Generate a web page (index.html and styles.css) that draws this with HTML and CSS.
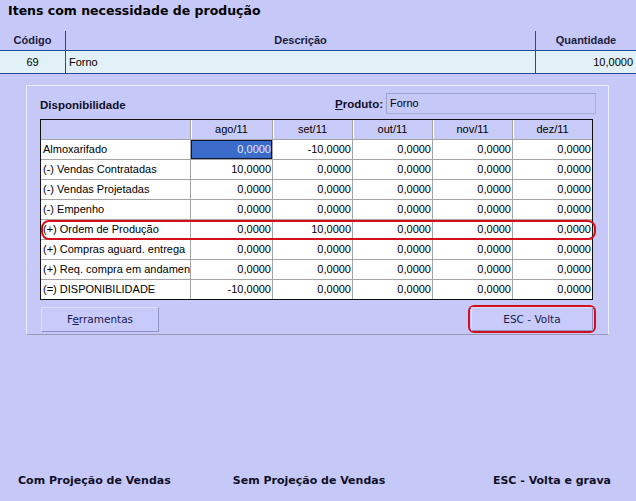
FILE: index.html
```html
<!DOCTYPE html>
<html lang="pt">
<head>
<meta charset="utf-8">
<title>Itens com necessidade de produção</title>
<link rel="stylesheet" href="styles.css">
</head>
<body>
<div class="title">Itens com necessidade de produção</div>

<div class="items">
  <div class="ih">Código</div>
  <div class="ih">Descrição</div>
  <div class="ih last">Quantidade</div>
  <div class="ic center">69</div>
  <div class="ic">Forno</div>
  <div class="ic right last">10,0000</div>
</div>

<div class="panel">
  <div class="ptop">
    <span class="ptitle">Disponibilidade</span>
    <span class="plabel"><u>P</u>roduto:</span>
    <div class="pinput">Forno</div>
  </div>

  <div class="gwrap">
    <div class="grid">
      <div class="gh"></div><div class="gh">ago/11</div><div class="gh">set/11</div><div class="gh">out/11</div><div class="gh">nov/11</div><div class="gh">dez/11</div>

      <div class="gl">Almoxarifado</div><div class="gn sel">0,0000</div><div class="gn">-10,0000</div><div class="gn">0,0000</div><div class="gn">0,0000</div><div class="gn">0,0000</div>

      <div class="gl">(-) Vendas Contratadas</div><div class="gn">10,0000</div><div class="gn">0,0000</div><div class="gn">0,0000</div><div class="gn">0,0000</div><div class="gn">0,0000</div>

      <div class="gl">(-) Vendas Projetadas</div><div class="gn">0,0000</div><div class="gn">0,0000</div><div class="gn">0,0000</div><div class="gn">0,0000</div><div class="gn">0,0000</div>

      <div class="gl">(-) Empenho</div><div class="gn">0,0000</div><div class="gn">0,0000</div><div class="gn">0,0000</div><div class="gn">0,0000</div><div class="gn">0,0000</div>

      <div class="gl">(+) Ordem de Produção</div><div class="gn">0,0000</div><div class="gn">10,0000</div><div class="gn">0,0000</div><div class="gn">0,0000</div><div class="gn">0,0000</div>

      <div class="gl">(+) Compras aguard. entrega</div><div class="gn">0,0000</div><div class="gn">0,0000</div><div class="gn">0,0000</div><div class="gn">0,0000</div><div class="gn">0,0000</div>

      <div class="gl">(+) Req. compra em andamento</div><div class="gn">0,0000</div><div class="gn">0,0000</div><div class="gn">0,0000</div><div class="gn">0,0000</div><div class="gn">0,0000</div>

      <div class="gl">(=) DISPONIBILIDADE</div><div class="gn">-10,0000</div><div class="gn">0,0000</div><div class="gn">0,0000</div><div class="gn">0,0000</div><div class="gn">0,0000</div>
    </div>
    <div class="oval"></div>
  </div>

  <div class="btns">
    <button class="btn btn-tools">F<u>e</u>rramentas</button>
    <div class="redbox"><button class="btn btn-esc">ESC - Volta</button></div>
  </div>
</div>

<div class="footer">
  <span>Com Projeção de Vendas</span>
  <span class="f2">Sem Projeção de Vendas</span>
  <span class="f3">ESC - Volta e grava</span>
</div>
</body>
</html>
```

FILE: styles.css
```css
* { box-sizing: border-box; }

html, body {
  margin: 0;
  padding: 0;
}

body {
  width: 636px;
  height: 501px;
  background: #c6c8f8;
  font-family: "Liberation Sans", Arial, sans-serif;
  font-size: 11px;
  color: #000;
  display: flex;
  flex-direction: column;
  overflow: hidden;
}

.title {
  height: 31px;
  padding: 3px 0 0 8px;
  line-height: 16px;
  font-family: "DejaVu Sans", Verdana, sans-serif;
  font-weight: bold;
  font-size: 12.5px;
  color: #000;
}

.items {
  display: grid;
  grid-template-columns: 66px 1fr 100px;
  grid-template-rows: 20px 23px;
}

.ih {
  border-right: 1px solid #1f4b98;
  border-bottom: 1px solid #1f4b98;
  font-weight: bold;
  font-size: 11px;
  color: #1c1c3c;
  text-align: center;
  line-height: 19px;
}

.ic {
  background: #e2f0f7;
  border-right: 1px solid #1f4b98;
  border-bottom: 1px solid #1f4b98;
  line-height: 22px;
  padding: 0 3px;
}

.last { border-right: none; }
.center { text-align: center; }
.right { text-align: right; }

.panel {
  margin: 11px 0 0 26px;
  width: 583px;
  border: 1px solid #ececff;
  border-bottom-color: #9a9ab6;
  padding: 7px 12px 1px 13px;
}

.ptop {
  display: flex;
  align-items: center;
  height: 21px;
  margin-bottom: 5px;
}

.ptitle {
  flex: 1;
  font-weight: bold;
  font-size: 11.5px;
  color: #10102a;
  padding-top: 2px;
}

.plabel {
  font-weight: bold;
  font-size: 11.5px;
  color: #10102a;
  margin-right: 3px;
}

.plabel u { text-decoration-thickness: 1px; }

.pinput {
  width: 210px;
  height: 21px;
  border: 1px solid #a6b2da;
  border-top-color: #9aa4cc;
  border-left-color: #9aa4cc;
  background: #c6c8f8;
  line-height: 19px;
  padding-left: 3px;
}

.gwrap {
  position: relative;
  width: 553px;
}

.grid {
  display: grid;
  grid-template-columns: 149px 81px 79px 79px 79px 79px;
  grid-template-rows: 19px repeat(8, 19px);
  gap: 1px;
  background: #a4a4a4;
  border: 1px solid #101010;
}

.gh {
  background: #c8cbf8;
  text-align: center;
  line-height: 19px;
  box-shadow: inset 1px 0 0 #ffffff;
}

.gh:first-child { box-shadow: none; }

.gl, .gn {
  background: #ffffff;
  line-height: 19px;
  white-space: nowrap;
  overflow: hidden;
}

.gl { padding-left: 2px; }
.gn { text-align: right; padding-right: 1px; }

.gn.sel {
  background: #3b6ccb;
  color: #e4e8f4;
  border: 1px solid #141430;
  line-height: 17px;
  padding-right: 0;
}

.oval {
  position: absolute;
  left: 1px;
  top: 101px;
  width: 555px;
  height: 20px;
  border: 2px solid #d4101c;
  border-radius: 8px;
}

.btns {
  display: flex;
  justify-content: space-between;
  align-items: center;
  margin-top: 5px;
  height: 28px;
}

.btn {
  font-family: "DejaVu Sans", Verdana, sans-serif;
  font-size: 10.5px;
  color: #1a1a50;
  background: #c8cbf9;
  border: 1px solid #dcdcff;
  border-right-color: #8f94c8;
  border-bottom-color: #8f94c8;
  height: 24px;
  padding: 0;
  margin: 0;
}

.btn-tools {
  width: 118px;
  margin-left: 1px;
  height: 25px;
}

.redbox {
  border: 2px solid #d4101c;
  border-radius: 6px;
  padding: 0 1px;
  height: 28px;
}

.btn-esc {
  width: 122px;
  display: block;
}

.footer {
  margin-top: auto;
  display: flex;
  padding: 0 25px 14px 18px;
  font-family: "DejaVu Sans", Verdana, sans-serif;
  font-weight: bold;
  font-size: 11px;
  line-height: 13px;
  color: #101028;
}

.f2 { margin-left: 62px; }
.f3 { margin-left: auto; }
```
